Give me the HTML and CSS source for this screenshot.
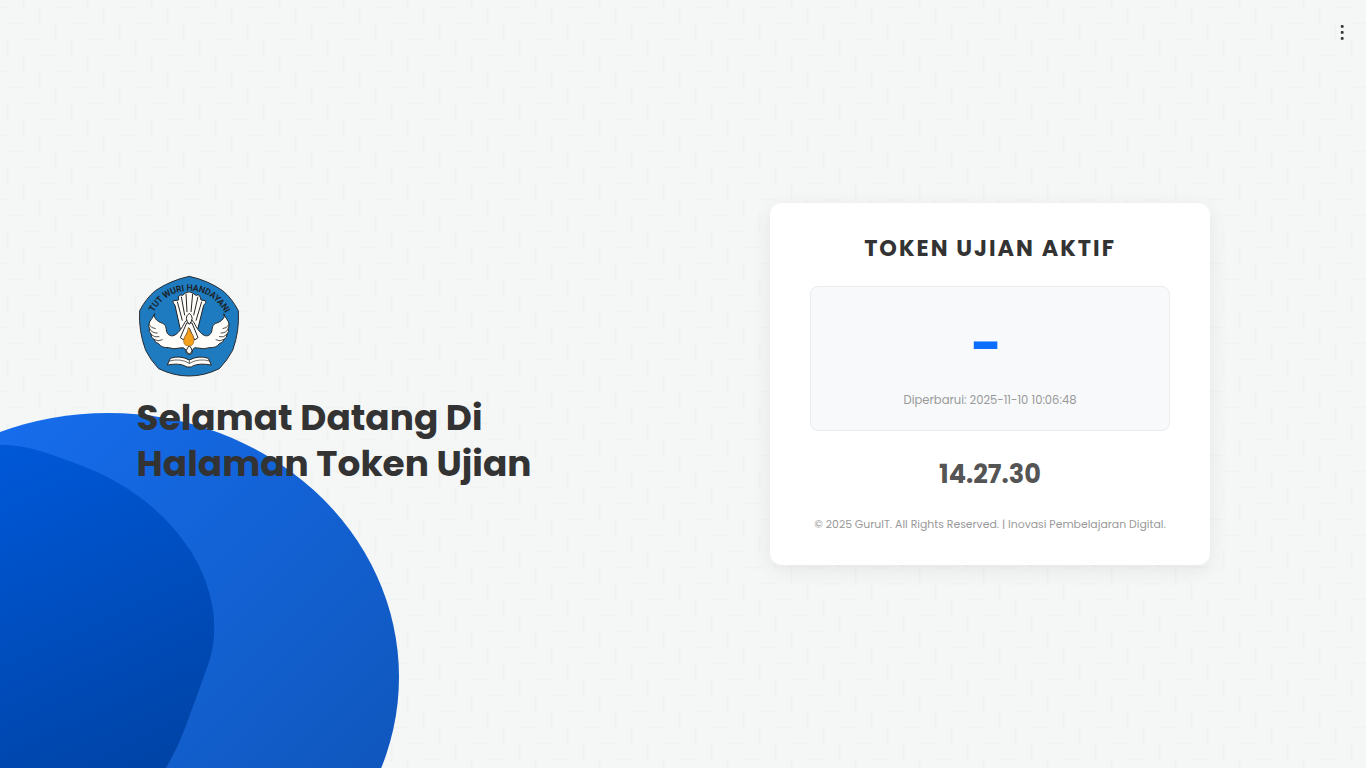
FILE: index.html
```html
<!DOCTYPE html>
<html lang="id">
<head>
    <meta charset="UTF-8">
    <meta name="viewport" content="width=device-width, initial-scale=1.0">
    <title>Token Ujian</title>
    <link rel="stylesheet" href="styles.css">
</head>
<body>

<div class="decor">
    <div class="shape shape-back"></div>
    <div class="shape shape-front"></div>
</div>

<button class="menu-btn" aria-label="Menu">
    <svg width="4" height="16" viewBox="0 0 4 16" fill="#333">
        <rect x="0.8" y="1" width="2.8" height="2.8" rx="0.9"/>
        <rect x="0.8" y="7" width="2.8" height="2.8" rx="0.9"/>
        <rect x="0.8" y="13" width="2.8" height="2.8" rx="0.9"/>
    </svg>
</button>

<div class="container">
    <div class="welcome">
        <svg class="logo" viewBox="24 21 306 306">
            <path d="M178 25 Q233 37 278 68 Q305 90 325 128 Q329 188 308 247 Q292 277 268 302 Q223 324 177 324 Q131 324 86 302 Q62 277 47 247 Q25 188 29 128 Q49 90 76 68 Q122 37 178 25Z" fill="#1f7bc0" stroke="#292c31" stroke-width="3"/>
            <path id="motto" d="M71 133 Q106 69 178 68 Q250 69 289 141" fill="none"/>
            <text class="motto"><textPath href="#motto" textLength="266">TUT WURI HANDAYANI</textPath></text>
            <g fill="#fffefa" stroke="#252525" stroke-width="3" stroke-linejoin="round">
                <!-- ekor -->
                <path d="M151 184 L135 112 Q124 98 132 98 L146 96 L145 86 Q151 78 158 82 L166 75 Q178 68 188 75 L198 82 Q208 78 211 88 L213 96 L225 98 Q232 100 221 112 L203 184Z"/>
                <path d="M142 101 L157 158 M154 86 L164 142 M168 77 L171 132 M188 77 L183 132 M204 86 L191 142 M215 101 L198 158" fill="none"/>
                <!-- sayap -->
                <path d="M74 137 C70 146 78 160 98 166 C112 172 106 188 113 197 C128 214 148 196 164 164 L178 147 L192 164 C208 196 227 214 242 197 C249 188 243 172 257 166 C278 160 287 146 281 137 C287 152 297 158 297 169 Q298 178 294 181 Q300 190 291 198 Q292 209 282 214 Q280 225 268 227 Q260 240 238 239 Q222 245 203 240 Q193 236 187 246 Q188 259 178 259 Q167 259 168 246 Q161 236 149 240 Q131 245 116 239 Q94 240 86 227 Q75 225 72 214 Q62 209 63 198 Q54 190 59 181 Q55 178 57 169 C58 158 68 152 74 137Z"/>
                <path d="M57 169 Q63 181 77 182 M59 183 Q67 196 83 195 M63 199 Q73 210 88 206 M72 214 Q83 222 98 215 M297 169 Q291 181 278 182 M295 183 Q287 196 272 195 M291 199 Q281 210 267 206 M282 214 Q271 222 257 215" fill="none" stroke-width="2.4"/>
                <path d="M170 165 L151 209 L161 216 L178 181 L194 216 L204 209 L186 165Z"/>
                <path d="M178 136 Q195 149 178 169 Q160 149 178 136Z"/>
                <path d="M178 233 Q185 240 186 248 Q184 257 178 257 Q171 257 169 248 Q171 240 178 233Z"/>
                <!-- buku -->
                <path d="M121 271 Q149 261 178 276 Q207 261 235 271 L244 291 Q209 285 190 293 L184 297 L171 297 L163 293 Q146 285 112 291Z"/>
                <path d="M118 279 Q152 270 178 286 Q206 270 239 279 M178 276 L178 288" fill="none" stroke-width="2"/>
            </g>
            <path d="M175 178 Q181 193 189 203 Q198 233 177 234 Q155 233 163 209 Q174 196 175 178Z" fill="#f3a01c" stroke="#9b661c" stroke-width="2"/>
        </svg>
        <h1>Selamat Datang Di<br>Halaman Token Ujian</h1>
    </div>

    <div class="card">
        <h2>TOKEN UJIAN AKTIF</h2>
        <div class="token-box">
            <div class="token">-</div>
            <div class="updated">Diperbarui: 2025-11-10 10:06:48</div>
        </div>
        <div class="clock">14.27.30</div>
        <footer>© 2025 GuruIT. All Rights Reserved. | Inovasi Pembelajaran Digital.</footer>
    </div>
</div>

</body>
</html>
```
FILE: styles.css
```css
* {
    box-sizing: border-box;
    margin: 0;
    padding: 0;
}
body {
    position: relative;
    height: 100vh;
    font-family: Poppins, Inter, sans-serif;
    color: #333;
    background-color: #f5f7f7;
    background-image: url("data:image/svg+xml,%3Csvg xmlns='http://www.w3.org/2000/svg' width='64' height='64'%3E%3Cpath d='M-10 7.5h19M54 7.5h19M6 23.5h20M22 39.5h20M38 55.5h20M7.5 38v20M23.5 -10v19M23.5 54v20M39.5 6v20M55.5 22v20' stroke='%23f1f3f3' stroke-width='2' fill='none'/%3E%3C/svg%3E");
}

/* bentuk dekorasi kiri bawah */
.decor {
    position: absolute;
    inset: 0;
    overflow: hidden;
}
.shape {
    position: absolute;
}
.shape-back {
    left: -182px;
    top: 413px;
    width: 581px;
    height: 528px;
    border-radius: 50%;
    background: linear-gradient(135deg, #1872f8, #0e52b2);
}
.shape-front {
    left: -165.5px;
    top: 454.5px;
    width: 363px;
    height: 411px;
    border-radius: 140px 190px 172px 150px / 140px 146px 200px 150px;
    background: linear-gradient(135deg, #005ce2, #003d96);
    transform: rotate(20deg);
}

.menu-btn {
    position: absolute;
    top: 24px;
    right: 22px;
    border: none;
    background: none;
    line-height: 0;
    cursor: pointer;
}
.container {
    position: relative;
    display: flex;
    align-items: center;
    justify-content: space-between;
    height: 100%;
    padding: 0 156px 0 10%;
}
.welcome {
    padding-bottom: 6px;
}
.logo {
    display: block;
    width: 102px;
    height: 102px;
    margin: 0 0 18px 1.4px;
}
.motto {
    font: 500 26px Roboto, sans-serif;
    fill: #1d1d1d;
    stroke: #1d1d1d;
    stroke-width: 0.4px;
}
h1 {
    font-size: 35.9px;
    line-height: 46px;
    white-space: nowrap;
}
.card {
    width: 440px;
    height: 362px;
    padding: 27px 40px 0;
    text-align: center;
    background: #fff;
    border-radius: 12px;
    box-shadow: 0 5px 20px rgba(0, 0, 0, 0.07);
}
h2 {
    margin-bottom: 20px;
    font-size: 22.4px;
    line-height: 36px;
    letter-spacing: 2px;
    white-space: nowrap;
}
.token-box {
    height: 145px;
    padding-top: 18px;
    background: #f8f9fb;
    border: 1px solid #e9ecef;
    border-radius: 8px;
}
.token {
    height: 85px;
    font-size: 53.5px;
    font-weight: 700;
    line-height: 82px;
    letter-spacing: 7px;
    color: #0d6efd;
}
.updated {
    font-size: 11.55px;
    line-height: 20px;
    color: #999;
}
.clock {
    margin-top: 24px;
    font-size: 25.6px;
    font-weight: 700;
    line-height: 39px;
    color: #555;
}
footer {
    margin-top: 22px;
    font-size: 10.88px;
    line-height: 18px;
    white-space: nowrap;
    color: #999;
}
```
